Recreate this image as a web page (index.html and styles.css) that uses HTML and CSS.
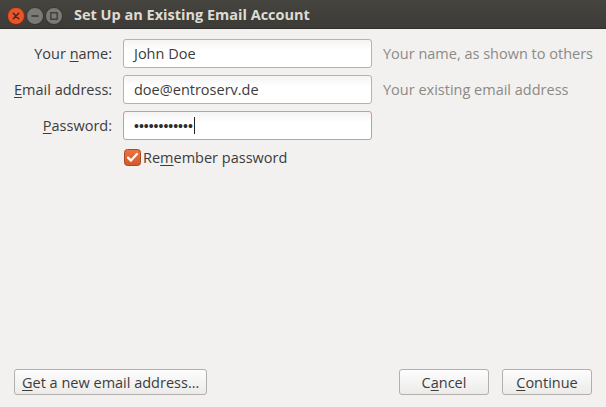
FILE: index.html
```html
<!DOCTYPE html>
<html>
<head>
<meta charset="utf-8">
<link rel="stylesheet" href="styles.css">
</head>
<body>
<div class="window">
  <div class="titlebar">
    <div class="wbtns">
      <span class="wbtn close"><svg width="18" height="18" viewBox="0 0 18 18"><circle cx="9" cy="9" r="8.5" fill="#e9542a" stroke="#7a2a12" stroke-width="0.8"/><path d="M6.3 6.3 L11.7 11.7 M11.7 6.3 L6.3 11.7" stroke="#3c2a22" stroke-width="1.5" stroke-linecap="round"/></svg></span>
      <span class="wbtn"><svg width="18" height="18" viewBox="0 0 18 18"><circle cx="9" cy="9" r="8.5" fill="#7b7a75" stroke="#2e2d2a" stroke-width="0.8"/><path d="M5.5 9 H12.5" stroke="#3a3935" stroke-width="1.6"/></svg></span>
      <span class="wbtn"><svg width="18" height="18" viewBox="0 0 18 18"><circle cx="9" cy="9" r="8.5" fill="#7b7a75" stroke="#2e2d2a" stroke-width="0.8"/><rect x="5.8" y="5.8" width="6.4" height="6.4" fill="none" stroke="#3a3935" stroke-width="1.3"/></svg></span>
    </div>
    <div class="title">Set Up an Existing Email Account</div>
  </div>
  <div class="content">
    <div class="form">
      <label class="lbl">Your <u>n</u>ame:</label>
      <div class="input">John Doe</div>
      <div class="hint">Your name, as shown to others</div>

      <label class="lbl"><u>E</u>mail address:</label>
      <div class="input">doe@entroserv.de</div>
      <div class="hint">Your existing email address</div>

      <label class="lbl"><u>P</u>assword:</label>
      <div class="input focus"><span class="dots">••••••••••••</span><span class="caret"></span></div>
      <div class="hint"></div>

      <div></div>
      <div class="check">
        <svg class="cb" width="17" height="17" viewBox="0 0 17 17"><defs><linearGradient id="g" x1="0" y1="0" x2="0" y2="1"><stop offset="0" stop-color="#ec7443"/><stop offset="1" stop-color="#d2582a"/></linearGradient></defs><rect x="0.5" y="0.5" width="16" height="16" rx="3" fill="url(#g)" stroke="#a84a24"/><path d="M4 8.6 L7 11.6 L13 5" fill="none" stroke="#fff" stroke-width="2.2" stroke-linecap="round" stroke-linejoin="round"/></svg>
        <span>Re<u>m</u>ember password</span>
      </div>
      <div></div>
    </div>
    <div class="spacer"></div>
    <div class="buttons">
      <button class="btn"><u>G</u>et a new email address…</button>
      <div class="right">
        <button class="btn cancel">C<u>a</u>ncel</button>
        <button class="btn cont"><u>C</u>ontinue</button>
      </div>
    </div>
  </div>
</div>
</body>
</html>
```
FILE: styles.css
```css
html, body {
  margin: 0;
  padding: 0;
  width: 606px;
  height: 407px;
  overflow: hidden;
  background: #f2f1f0;
  font-family: "Open Sans", "Noto Sans", sans-serif;
  font-size: 14.5px;
  color: #3c3c3c;
}
u { text-decoration-thickness: 1px; text-underline-offset: 2px; }
.window {
  display: flex;
  flex-direction: column;
  height: 407px;
}
.titlebar {
  height: 29px;
  background: linear-gradient(#45443f, #3c3b37);
  display: flex;
  align-items: center;
  border-bottom: 1px solid #2f2e2b;
  box-sizing: border-box;
}
.wbtns {
  display: flex;
  gap: 1px;
  padding-left: 7px;
  margin-top: 3px;
}
.wbtn svg { display: block; }
.title {
  margin-left: 11px;
  color: #dfdbd2;
  font-weight: bold;
  font-size: 14.5px;
  margin-top: 1px;
}
.content {
  flex: 1;
  display: flex;
  flex-direction: column;
  padding: 10px 14px 12px 14px;
}
.form {
  display: grid;
  grid-template-columns: 98px 249px auto;
  column-gap: 11px;
  row-gap: 7px;
  align-items: center;
}
.lbl {
  text-align: right;
  white-space: nowrap;
  color: #3c3c3c;
}
.input {
  height: 29px;
  box-sizing: border-box;
  border: 1px solid #b6b3ae;
  border-radius: 3px;
  background: linear-gradient(#f4f4f4, #ffffff 40%);
  padding: 0 10px;
  display: flex;
  align-items: center;
  color: #3c3c3c;
}
.input.focus {
  border-color: #e4946f;
}
.dots {
  font-family: "Liberation Sans", sans-serif;
  font-size: 14px;
  letter-spacing: 0;
  color: #2c2c2c;
}
.caret {
  display: inline-block;
  width: 1px;
  height: 17px;
  background: #222;
  margin-left: 1px;
}
.hint {
  color: #8c8a86;
  white-space: nowrap;
}
.check {
  display: flex;
  align-items: center;
  gap: 2px;
  margin-top: 1px;
  margin-left: 1px;
}
.cb { display: block; }
.spacer { flex: 1; }
.buttons {
  display: flex;
  justify-content: space-between;
  align-items: center;
}
.right { display: flex; gap: 13px; }
.btn {
  height: 26px;
  box-sizing: border-box;
  border: 1px solid #b3b0ab;
  border-radius: 3px;
  background: linear-gradient(#fdfdfd, #ecebea);
  font-family: inherit;
  font-size: 14.5px;
  color: #3c3c3c;
  padding: 0 7px;
  margin: 0;
}
.cancel { width: 90px; }
.cont { width: 90px; }
```
